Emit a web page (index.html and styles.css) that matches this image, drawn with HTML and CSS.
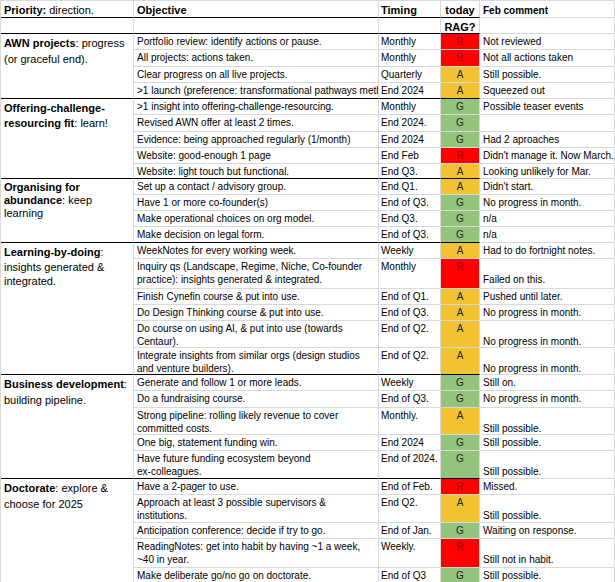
FILE: index.html
```html
<!DOCTYPE html>
<html>
<head>
<meta charset="utf-8">
<link rel="stylesheet" href="styles.css">
</head>
<body>
<div class="sheet">
  <!-- header -->
  <div class="c p hd end"><b>Priority:</b> direction.</div>
  <div class="c o hd end"><b>Objective</b></div>
  <div class="c t hd end"><b>Timing</b></div>
  <div class="c r hd end"><b>today</b></div>
  <div class="c f hd fc"><b>Feb comment</b></div>

  <div class="c p end"></div>
  <div class="c o end"></div>
  <div class="c t end"></div>
  <div class="c r hd end"><b>RAG?</b></div>
  <div class="c f"></div>

  <!-- AWN -->
  <div class="c p pr s4 end lh16"><b>AWN projects</b>: progress<br>(or graceful end).</div>
  <div class="c o">Portfolio review: identify actions or pause.</div>
  <div class="c t">Monthly</div>
  <div class="c r red">R</div>
  <div class="c f">Not reviewed</div>

  <div class="c o">All projects: actions taken.</div>
  <div class="c t">Monthly</div>
  <div class="c r red">R</div>
  <div class="c f">Not all actions taken</div>

  <div class="c o">Clear progress on all live projects.</div>
  <div class="c t">Quarterly</div>
  <div class="c r amb">A</div>
  <div class="c f">Still possible.</div>

  <div class="c o end">&gt;1 launch (preference: transformational pathways methodology)</div>
  <div class="c t end">End 2024</div>
  <div class="c r amb end">A</div>
  <div class="c f">Squeezed out</div>

  <!-- Offering -->
  <div class="c p pr s5 end lh15"><b>Offering-challenge-<br>resourcing fit</b>: learn!</div>
  <div class="c o">&gt;1 insight into offering-challenge-resourcing.</div>
  <div class="c t">Monthly</div>
  <div class="c r grn">G</div>
  <div class="c f">Possible teaser events</div>

  <div class="c o">Revised AWN offer at least 2 times.</div>
  <div class="c t">End 2024.</div>
  <div class="c r grn">G</div>
  <div class="c f"></div>

  <div class="c o">Evidence: being approached regularly (1/month)</div>
  <div class="c t">End 2024</div>
  <div class="c r grn">G</div>
  <div class="c f">Had 2 aproaches</div>

  <div class="c o">Website: good-enough 1 page</div>
  <div class="c t">End Feb</div>
  <div class="c r red">R</div>
  <div class="c f">Didn't manage it. Now March.</div>

  <div class="c o end">Website: light touch but functional.</div>
  <div class="c t end">End Q3.</div>
  <div class="c r amb end">A</div>
  <div class="c f">Looking unlikely for Mar.</div>

  <!-- Organising -->
  <div class="c p pr s4 end lh13"><b>Organising for<br>abundance</b>: keep<br>learning</div>
  <div class="c o">Set up a contact / advisory group.</div>
  <div class="c t">End Q1.</div>
  <div class="c r amb">A</div>
  <div class="c f">Didn't start.</div>

  <div class="c o">Have 1 or more co-founder(s)</div>
  <div class="c t">End of Q3.</div>
  <div class="c r grn">G</div>
  <div class="c f">No progress in month.</div>

  <div class="c o">Make operational choices on org model.</div>
  <div class="c t">End Q3.</div>
  <div class="c r grn">G</div>
  <div class="c f">n/a</div>

  <div class="c o end">Make decision on legal form.</div>
  <div class="c t end">End of Q3.</div>
  <div class="c r grn end">G</div>
  <div class="c f">n/a</div>

  <!-- Learning -->
  <div class="c p pr s6 end lh15"><b>Learning-by-doing</b>:<br>insights generated &amp;<br>integrated.</div>
  <div class="c o">WeekNotes for every working week.</div>
  <div class="c t">Weekly</div>
  <div class="c r amb">A</div>
  <div class="c f">Had to do fortnight notes.</div>

  <div class="c o">Inquiry qs (Landscape, Regime, Niche, Co-founder<br>practice): insights generated &amp; integrated.</div>
  <div class="c t">Monthly</div>
  <div class="c r red">R</div>
  <div class="c f low">Failed on this.</div>

  <div class="c o">Finish Cynefin course &amp; put into use.</div>
  <div class="c t">End of Q1.</div>
  <div class="c r amb">A</div>
  <div class="c f">Pushed until later.</div>

  <div class="c o">Do Design Thinking course &amp; put into use.</div>
  <div class="c t">End of Q3.</div>
  <div class="c r amb">A</div>
  <div class="c f">No progress in month.</div>

  <div class="c o">Do course on using AI, &amp; put into use (towards<br>Centaur).</div>
  <div class="c t">End of Q2.</div>
  <div class="c r amb">A</div>
  <div class="c f low">No progress in month.</div>

  <div class="c o end">Integrate insights from similar orgs (design studios<br>and venture builders).</div>
  <div class="c t end">End of Q2.</div>
  <div class="c r amb end">A</div>
  <div class="c f low">No progress in month.</div>

  <!-- Business -->
  <div class="c p pr s5 end lh16"><b>Business development</b>:<br>building pipeline.</div>
  <div class="c o">Generate and follow 1 or more leads.</div>
  <div class="c t">Weekly</div>
  <div class="c r grn">G</div>
  <div class="c f">Still on.</div>

  <div class="c o">Do a fundraising course.</div>
  <div class="c t">End of Q3.</div>
  <div class="c r grn">G</div>
  <div class="c f">No progress in month.</div>

  <div class="c o">Strong pipeline: rolling likely revenue to cover<br>committed costs.</div>
  <div class="c t">Monthly.</div>
  <div class="c r amb">A</div>
  <div class="c f low">Still possible.</div>

  <div class="c o">One big, statement funding win.</div>
  <div class="c t">End 2024</div>
  <div class="c r grn">G</div>
  <div class="c f">Still possible.</div>

  <div class="c o end">Have future funding ecosystem beyond<br>ex-colleagues.</div>
  <div class="c t end">End of 2024.</div>
  <div class="c r grn end">G</div>
  <div class="c f low">Still possible.</div>

  <!-- Doctorate -->
  <div class="c p pr s5 lh16"><b>Doctorate</b>: explore &amp;<br>choose for 2025</div>
  <div class="c o">Have a 2-pager to use.</div>
  <div class="c t">End of Feb.</div>
  <div class="c r red">R</div>
  <div class="c f">Missed.</div>

  <div class="c o">Approach at least 3 possible supervisors &amp;<br>institutions.</div>
  <div class="c t">End Q2.</div>
  <div class="c r amb">A</div>
  <div class="c f low">Still possible.</div>

  <div class="c o">Anticipation conference: decide if try to go.</div>
  <div class="c t">End of Jan.</div>
  <div class="c r grn">G</div>
  <div class="c f">Waiting on response.</div>

  <div class="c o">ReadingNotes: get into habit by having ~1 a week,<br>~40 in year.</div>
  <div class="c t">Weekly.</div>
  <div class="c r red">R</div>
  <div class="c f low">Still not in habit.</div>

  <div class="c o">Make deliberate go/no go on doctorate.</div>
  <div class="c t">End of Q3</div>
  <div class="c r grn">G</div>
  <div class="c f">Still possible.</div>
</div>
</body>
</html>
```
FILE: styles.css
```css
html, body {
  margin: 0;
  padding: 0;
  background: #fff;
  overflow: hidden;
}

.sheet {
  box-sizing: border-box;
  width: 615px;
  display: grid;
  grid-template-columns: 133px 245px 62px 39px 135px;
  grid-template-rows:
    17px 16px
    16px 17px 16px 16px
    16px 17px 16px 16px 15px
    16px 16px 16px 16px
    16px 30px 16px 16px 27px 27px
    16px 17px 27px 16px 28px
    16px 28px 16px 29px 16px;
  border-top: 1px solid #d9d9d9;
  border-left: 1px solid #d9d9d9;
  font-family: "Liberation Sans", Arial, sans-serif;
  font-size: 10px;
  color: #000;
}

.c {
  box-sizing: border-box;
  border-right: 1px solid #d9d9d9;
  border-bottom: 1px solid #d9d9d9;
  padding: 2px 3px 0 3px;
  line-height: 12.5px;
  white-space: nowrap;
  overflow: hidden;
}

.end {
  border-bottom-color: #000;
}

.hd {
  font-size: 11px;
  line-height: 14px;
  padding-top: 2px;
}

.hd b {
  font-weight: bold;
}

.fc {
  font-size: 10px;
  padding-top: 3px;
}

.p {
  font-size: 11px;
}

.pr {
  white-space: nowrap;
  padding-top: 2px;
}

.s4 { grid-row: span 4; }
.s5 { grid-row: span 5; }
.s6 { grid-row: span 6; }

.lh13 { line-height: 13px; }
.lh15 { line-height: 14.5px; }
.lh16 { line-height: 16px; padding-top: 1px; }

.t {
  padding-left: 2px;
}

.r {
  text-align: center;
  padding-left: 0;
  padding-right: 0;
}

.red {
  background: #ff0000;
  color: #990000;
}

.amb {
  background: #f1c232;
  color: #222;
}

.grn {
  background: #93c47d;
  color: #222;
}

.low {
  padding-top: 14.5px;
}
```
